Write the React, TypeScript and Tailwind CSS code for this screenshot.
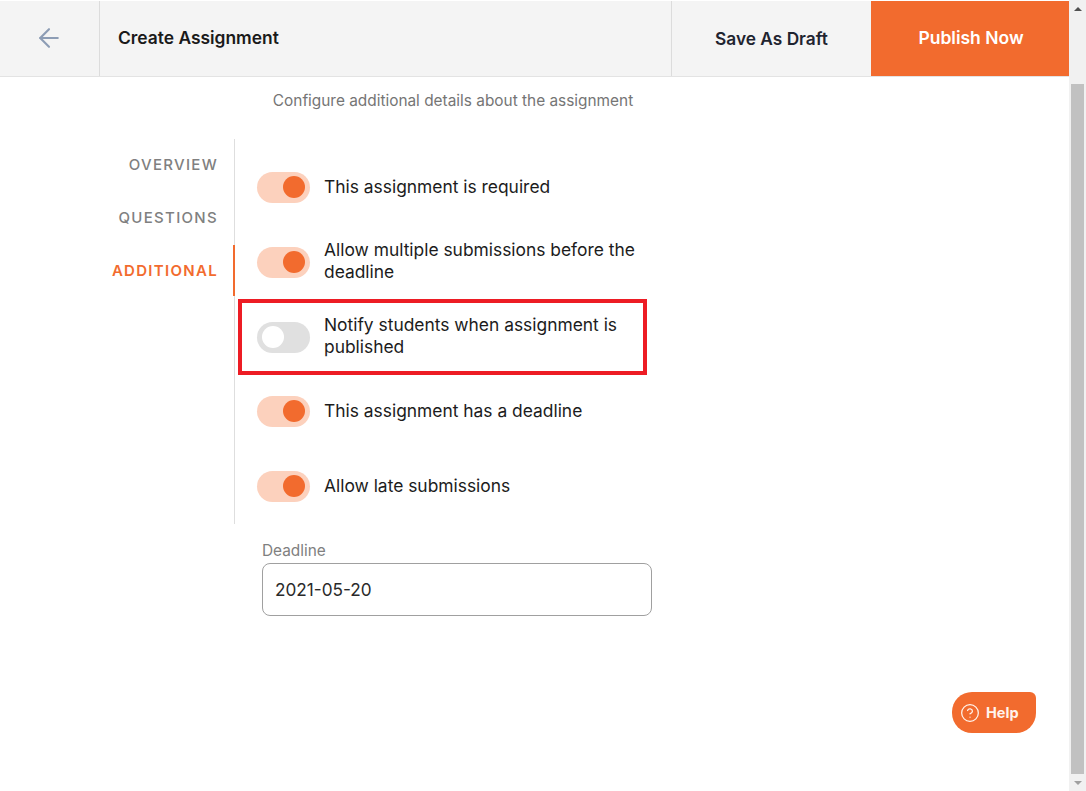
import React from 'react';
import { ArrowLeft, CircleHelp } from 'lucide-react';

const font = "font-['Inter','Noto_Sans',sans-serif]";

const Toggle: React.FC<{ on: boolean }> = ({ on }) => (
  <div
    className={`flex h-[31px] w-[53px] shrink-0 items-center rounded-full px-[5px] ${
      on ? 'justify-end bg-[#fcd1bd]' : 'justify-start bg-[#e0e0e0]'
    }`}
  >
    <div className={`h-[22px] w-[22px] rounded-full ${on ? 'bg-[#f26b2e]' : 'bg-white'}`} />
  </div>
);

const settings = [
  { label: 'This assignment is required', on: true },
  { label: 'Allow multiple submissions before the deadline', on: true, twoLines: true },
  { label: 'Notify students when assignment is published', on: false, marked: true, twoLines: true },
  { label: 'This assignment has a deadline', on: true },
  { label: 'Allow late submissions', on: true }
];

const tabs = [
  { label: 'OVERVIEW', active: false },
  { label: 'QUESTIONS', active: false },
  { label: 'ADDITIONAL', active: true }
];

const App: React.FC = () => {
  return (
    <div className={`flex h-[791px] w-[1086px] overflow-hidden bg-white ${font}`}>
      <div className="relative flex min-w-0 flex-1 flex-col pt-px">
        <header className="flex h-[76px] shrink-0 border-b border-[#e3e3e3] bg-[#f4f4f4]">
          <div className="flex w-[100px] items-center justify-center border-r border-[#dcdcdc] pb-[2px] pr-[2px]">
            <ArrowLeft className="h-[30px] w-[30px] text-[#8d9db5]" strokeWidth={1.7} />
          </div>
          <div className="flex flex-1 items-center pl-[18px] text-[17.4px] font-semibold text-[#1a1a1a]">
            Create Assignment
          </div>
          <div className="flex w-[200px] items-center justify-center border-l border-[#dcdcdc] text-[17.3px] font-semibold text-[#1f2430]">
            Save As Draft
          </div>
          <div className="flex w-[198px] items-center justify-center bg-[#f26b2e] pl-[2px] text-[17.5px] font-semibold text-white">
            Publish Now
          </div>
        </header>

        <p className="mt-[15px] w-[906px] text-center text-[15.4px] leading-[18px] text-[#757575]">
          Configure additional details about the assignment
        </p>

        <div className="mt-[29px] flex">
          <nav className="flex h-[385px] w-[235px] flex-col items-stretch gap-[2px] border-r border-[#dedede]">
            {tabs.map((tab) => (
              <div
                key={tab.label}
                className={`-mr-px flex h-[51px] items-center justify-end pt-[2px] text-[15px] font-medium tracking-[1.3px] ${
                  tab.active
                    ? 'border-r-2 border-[#f26b2e] pr-[15px] font-semibold text-[#f26b2e]'
                    : 'pr-[17px] text-[#808080]'
                }`}
              >
                {tab.label}
              </div>
            ))}
          </nav>
          <div className="w-[420px] pl-[3px] pt-[11px]">
            {settings.map((item) => (
              <div
                key={item.label}
                className={`flex w-[409px] items-center gap-[14px] ${
                  item.marked
                    ? '-mb-[1px] -mt-[0.5px] h-[76px] border-[4px] border-[#ed1c24] pl-[15px] pr-[4px]'
                    : 'h-[74.75px] pl-[19px] pr-[8px]'
                }`}
              >
                <Toggle on={item.on} />
                <span className={`text-[17.4px] leading-[22px] text-[#1c1c1c] ${item.twoLines ? '-mt-[2px]' : ''}`}>
                  {item.label}
                </span>
              </div>
            ))}
          </div>
        </div>

        <div className="ml-[262px] mt-[18px] w-[390px]">
          <label className="block text-[15.4px] leading-[18px] text-[#808080]">Deadline</label>
          <div className="mt-[3px] flex h-[53px] items-center rounded-[8px] border border-[#a0a0a0] px-[12px] text-[17.2px] text-[#2a2a2a]">
            2021-05-20
          </div>
        </div>

        <button className="absolute left-[952px] top-[692px] flex h-[41px] w-[84px] items-center gap-[6px] rounded-[20px] rounded-tr-[6px] bg-[#f26b2e] pl-[8px] text-[14.5px] font-bold text-[#fff3ec]">
          <CircleHelp className="h-[20px] w-[20px]" strokeWidth={1.5} />
          Help
        </button>
      </div>

      {/* scrollbar */}
      <div className="flex w-[17px] shrink-0 flex-col bg-[#f1f1f1]">
        <div className="flex h-[17px] items-center justify-center">
          <div className="h-0 w-0 border-x-[4px] border-b-[4px] border-x-transparent border-b-[#505050]" />
        </div>
        <div className="mx-[2px] mt-[67px] h-[690px] bg-[#c1c1c1]" />
        <div className="flex h-[17px] items-center justify-center">
          <div className="h-0 w-0 border-x-[4px] border-t-[4px] border-x-transparent border-t-[#a0a0a0]" />
        </div>
      </div>
    </div>
  );
};

export default App;
